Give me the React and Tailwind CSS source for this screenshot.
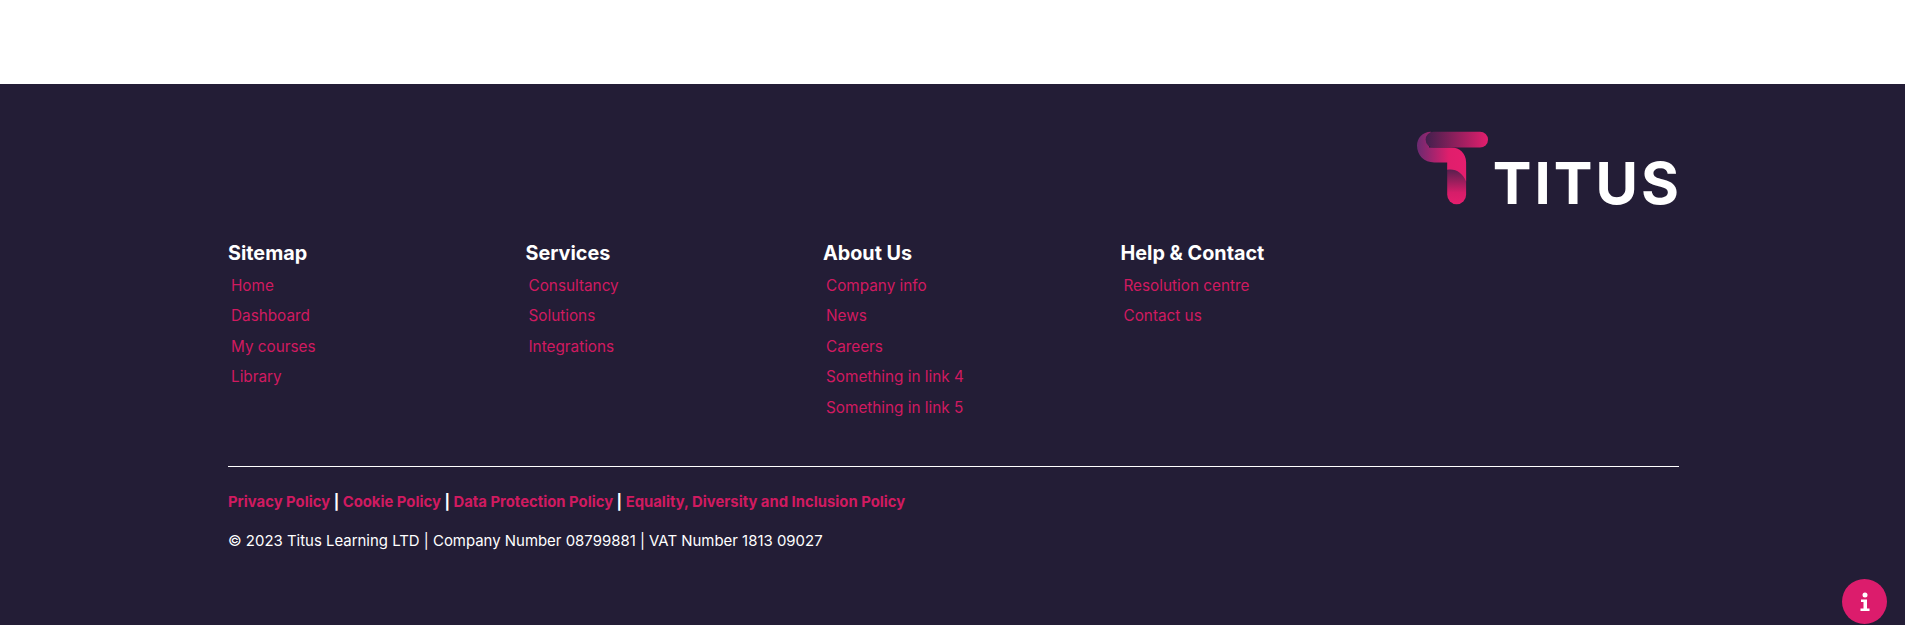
const columns = [
  { title: "Sitemap", links: ["Home", "Dashboard", "My courses", "Library"] },
  { title: "Services", links: ["Consultancy", "Solutions", "Integrations"] },
  { title: "About Us", links: ["Company info", "News", "Careers", "Something in link 4", "Something in link 5"] },
  { title: "Help & Contact", links: ["Resolution centre", "Contact us"] },
];
const policies = ["Privacy Policy", "Cookie Policy", "Data Protection Policy", "Equality, Diversity and Inclusion Policy"];

function Mark() {
  return (
    <svg width="71" height="74" viewBox="24 20 214 219" className="block">
      <defs>
        <linearGradient id="rib" x1="0" x2="1" y1="0" y2="0">
          <stop offset="0" stopColor="#6a2a70" />
          <stop offset="0.65" stopColor="#e01e6c" />
          <stop offset="1" stopColor="#e61e6e" />
        </linearGradient>
        <linearGradient id="bar" x1="0" x2="1" y1="0" y2="0">
          <stop offset="0" stopColor="#41204d" />
          <stop offset="1" stopColor="#e21e6d" />
        </linearGradient>
        <linearGradient id="stem" x1="0" x2="0" y1="0" y2="1">
          <stop offset="0" stopColor="#3f2049" />
          <stop offset="0.7" stopColor="#d51d69" />
          <stop offset="1" stopColor="#e61e6e" />
        </linearGradient>
      </defs>
      <path d="M115 120 H172 V210 A28.500 28.500 0 0 1 115 210 Z" fill="url(#stem)" />
      <path d="M66 20 C40 20 24 40 24 62 C24 92 46 113 76 113 H115 V135 C140 130 162 145 172 170 V112 C172 86 152 68 128 68 H60 Z" fill="url(#rib)" />
      <path d="M74 20 H214 A24 24 0 0 1 214 68 H74 A24 24 0 0 1 74 20 Z" fill="url(#bar)" />
    </svg>
  );
}

export default function App() {
  return (
    <div className="h-[625px] overflow-hidden bg-white font-['Inter',sans-serif]">
      <div className="h-[84px]" />
      <footer className="h-[541px] bg-[#231d36] pl-[228px] pr-[226px] pt-[47px]">
        <div className="flex h-[76px] items-start justify-end">
          <div className="flex items-start">
            <Mark />
            <span className="mt-[20px] mr-[-3px] ml-[5px] text-[58px] leading-[64px] font-bold tracking-[3px] text-white">TITUS</span>
          </div>
        </div>
        <div className="mt-[34px] flex h-[226px] border-b border-white">
          {columns.map((c) => (
            <div key={c.title} className="w-[297.5px]">
              <h3 className="text-[19.800px] leading-[24px] font-bold text-white">{c.title}</h3>
              <ul className="mt-[5.500px] pl-[3px]">
                {c.links.map((l) => (
                  <li key={l} className="text-[15.300px] leading-[30.600px] text-[#d01a60]">{l}</li>
                ))}
              </ul>
            </div>
          ))}
        </div>
        <p className="mt-[23px] text-[14.850px] leading-[24px] font-bold text-[#d01a60]">
          {policies.map((p, i) => (
            <span key={p}>
              {i > 0 && <span className="text-white"> | </span>}
              {p}
            </span>
          ))}
        </p>
        <p className="mt-[15px] text-[14.950px] leading-[24px] text-white">© 2023 Titus Learning LTD | Company Number 08799881 | VAT Number 1813 09027</p>
      </footer>
      <button className="fixed right-[18px] bottom-[1px] flex h-[45px] w-[45px] items-center justify-center rounded-full bg-[#dc1c6c]">
        <svg width="14" height="22" viewBox="0 0 14 22" fill="white">
          <circle cx="7" cy="4" r="2.500" />
          <path d="M3 8.500 H9 V17.500 H11.500 V20 H2.500 V17.500 H5.500 V11 H3 Z" />
        </svg>
      </button>
    </div>
  );
}
